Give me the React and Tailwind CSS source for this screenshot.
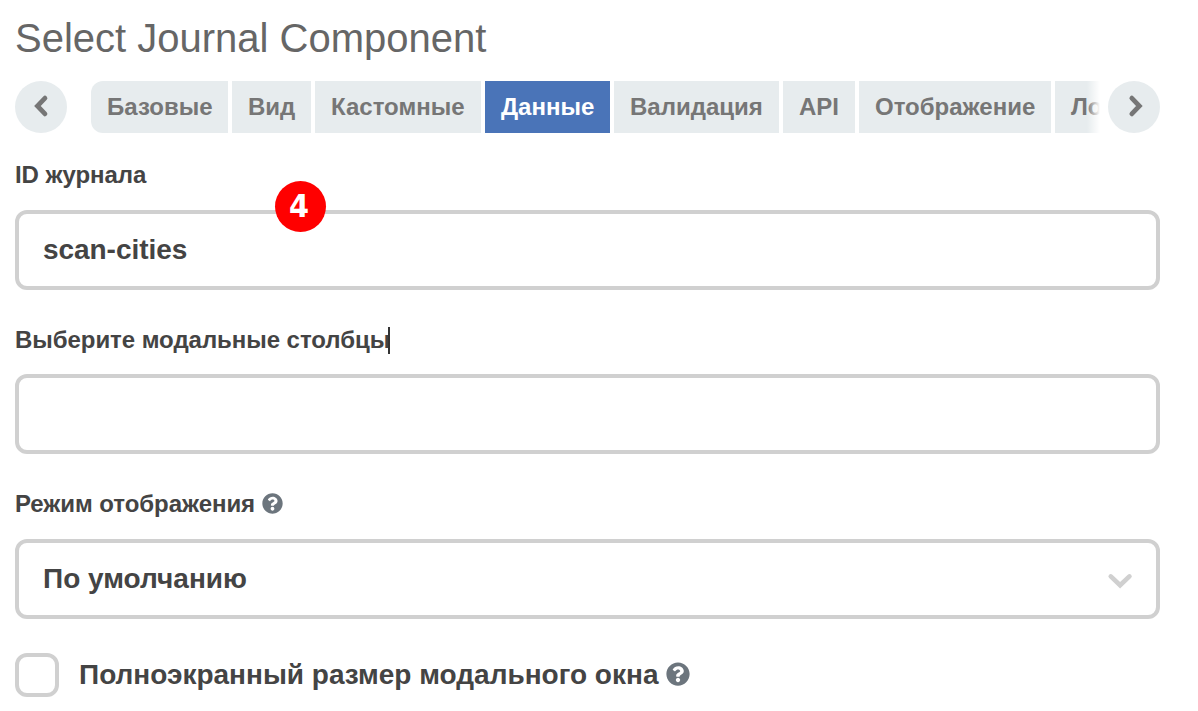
import { FaQuestionCircle } from "react-icons/fa";

const tabs = [
  { label: "Базовые", box: "w-[137px] rounded-l-[12px]" },
  { label: "Вид", box: "w-[79px]" },
  { label: "Кастомные", box: "w-[166px]" },
  { label: "Данные", box: "w-[125px]", active: true },
  { label: "Валидация", box: "w-[165px]" },
  { label: "API", box: "w-[72px]" },
  { label: "Отображение", box: "w-[192px]" },
  { label: "Логика", box: "w-[112px]" },
];

function Chevron({ points, className }) {
  return (
    <svg viewBox="0 0 52 52" className={className} fill="none" stroke="currentColor" strokeLinecap="round" strokeLinejoin="miter">
      <polyline points={points} strokeWidth="4.7" />
    </svg>
  );
}

function ScrollButton({ points, label }) {
  return (
    <button aria-label={label} className="size-[52px] shrink-0 rounded-full bg-[#e7ecee] text-[#767676]">
      <Chevron points={points} className="size-[52px]" />
    </button>
  );
}

function Label({ children }) {
  return <div className="flex h-[30px] items-center text-[24px] leading-[30px] tracking-[-0.05px] whitespace-nowrap">{children}</div>;
}

function Field({ children }) {
  return (
    <div className="flex h-[80px] w-full items-center justify-between rounded-[12px] border-4 border-[#d0d0d0] pl-[24px] text-[28px] leading-[32px]">
      {children}
    </div>
  );
}

export default function App() {
  return (
    <main className="h-[711px] w-[1198px] overflow-hidden bg-white pr-[38px] pl-[15px] font-['Liberation_Sans',Arial,sans-serif] font-bold text-[#444444]">
      <h1 className="h-[81px] pt-[15px] text-[40px] leading-[46px] font-normal whitespace-nowrap text-[#666666]">
        Select Journal Component
      </h1>

      <nav className="flex h-[52px]">
        <ScrollButton label="Назад" points="30,17.1 22.4,25 30,32.9" />
        <div className="relative ml-[24px] flex w-[1009px] shrink-0 gap-[4px] overflow-hidden">
          {tabs.map((t) => (
            <div
              key={t.label}
              className={`flex h-[52px] shrink-0 items-center pl-[16px] text-[24px] leading-[28px] whitespace-nowrap ${t.box} ${
                t.active ? "bg-[#4a74b8] text-white" : "bg-[#e7ecee] text-[#767676]"
              }`}
            >
              {t.label}
            </div>
          ))}
          <div className="absolute top-0 right-0 h-full w-[13px] bg-linear-to-r from-white/0 to-white" />
        </div>
        <div className="ml-[8px]">
          <ScrollButton label="Вперёд" points="23.8,17.1 31.4,25 23.8,32.9" />
        </div>
      </nav>

      <section className="relative mt-[27px]">
        <Label>ID журнала</Label>
        <div className="mt-[20px]">
          <Field>
            <span className="tracking-[-0.05px]">scan-cities</span>
          </Field>
        </div>
        <span className="absolute top-[20.5px] left-[259.6px] flex size-[51px] items-center justify-center rounded-full bg-[#ff0000] pr-[2px] font-['DejaVu_Sans_Condensed','DejaVu_Sans',sans-serif] text-[32px] leading-none font-stretch-semi-condensed text-white">
          4
        </span>
      </section>

      <section className="mt-[35px]">
        <Label>
          <span>Выберите модальные столбцы</span>
          <span className="-ml-[2px] h-[27px] w-[2px] bg-[#333333]" />
        </Label>
        <div className="mt-[19px]">
          <Field />
        </div>
      </section>

      <section className="mt-[35px]">
        <Label>
          <span>Режим отображения</span>
          <FaQuestionCircle className="mb-[2px] ml-[7px] size-[21px] text-[#6c757d]" />
        </Label>
        <div className="mt-[20px]">
          <Field>
            <span>По умолчанию</span>
            <Chevron points="16.8,23.4 26.1,32.2 35.4,23.4" className="mr-[10px] size-[52px] text-[#d0d0d0]" />
          </Field>
        </div>
      </section>

      <section className="mt-[34px] flex h-[44px] items-center">
        <div className="size-[44px] rounded-[12px] border-4 border-[#d0d0d0]" />
        <span className="ml-[20px] text-[28px] leading-[32px] whitespace-nowrap">Полноэкранный размер модального окна</span>
        <FaQuestionCircle className="mb-[2px] ml-[8px] size-[24px] text-[#6c757d]" />
      </section>
    </main>
  );
}
